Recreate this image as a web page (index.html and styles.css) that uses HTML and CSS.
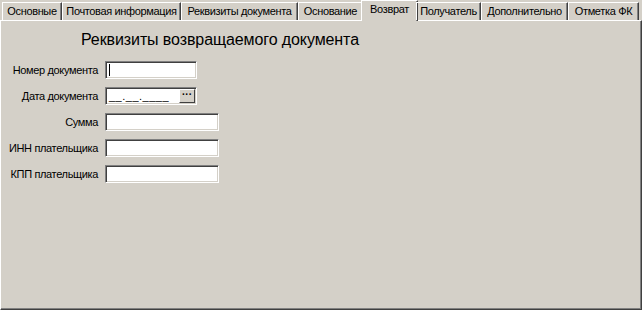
FILE: index.html
```html
<!DOCTYPE html>
<html lang="ru">
<head>
    <meta charset="UTF-8">
    <title>Возврат</title>
    <link rel="stylesheet" href="styles.css">
</head>
<body>
    <div class="tabs">
        <div class="tab w1">Основные</div>
        <div class="tab w2">Почтовая информация</div>
        <div class="tab w3">Реквизиты документа</div>
        <div class="tab w4">Основание</div>
        <div class="tab w5 active">Возврат</div>
        <div class="tab w6">Получатель</div>
        <div class="tab w7">Дополнительно</div>
        <div class="tab w8">Отметка ФК</div>
    </div>

    <div class="page">
        <div class="title">Реквизиты возвращаемого документа</div>

        <div class="form">
            <label class="lbl">Номер документа</label>
            <div class="edit short"><span class="caret"></span></div>

            <label class="lbl">Дата документа</label>
            <div class="edit short date">
                <span class="mask">__.__.____</span>
                <span class="dots">···</span>
            </div>

            <label class="lbl">Сумма</label>
            <div class="edit long"></div>

            <label class="lbl">ИНН плательщика</label>
            <div class="edit long"></div>

            <label class="lbl">КПП плательщика</label>
            <div class="edit long"></div>
        </div>
    </div>
</body>
</html>
```

FILE: styles.css
```css
body {
    margin: 0;
    width: 642px;
    height: 310px;
    overflow: hidden;
    background: #d4d0c8;
    font-family: "Liberation Sans", Arial, sans-serif;
    font-size: 11px;
    letter-spacing: -0.35px;
    color: #000;
}

/* вкладки */
.tabs {
    display: flex;
    align-items: flex-end;
    height: 20px;
    padding-left: 2px;
    position: relative;
    z-index: 1;
}

.tab {
    box-sizing: border-box;
    height: 18px;
    line-height: 16px;
    text-align: center;
    white-space: nowrap;
    border-top: 1px solid #fff;
    border-left: 1px solid #fff;
    border-right: 1px solid #404040;
    box-shadow: inset -1px 0 #808080;
}

.tab.active {
    height: 21px;
    margin: 0 -2px -1px -2px;
    line-height: 17px;
    background: #d4d0c8;
    padding-bottom: 3px;
}

.w1 { width: 60px; }
.w2 { width: 119px; }
.w3 { width: 117px; }
.w4 { width: 65px; }
.w5 { width: 57px; }
.w6 { width: 65px; }
.w7 { width: 87px; }
.w8 { width: 71px; }

/* страница */
.page {
    box-sizing: border-box;
    height: 290px;
    border-top: 1px solid #fff;
    border-left: 1px solid #fff;
    border-right: 1px solid #404040;
    border-bottom: 1px solid #404040;
    box-shadow: inset -1px -1px #808080;
}

.title {
    font-size: 16px;
    letter-spacing: -0.1px;
    padding: 10px 0 0 80px;
    height: 30px;
}

.form {
    display: grid;
    grid-template-columns: 97px auto;
    column-gap: 7px;
    row-gap: 8px;
    justify-items: start;
    align-items: center;
}

.lbl {
    justify-self: end;
}

.edit {
    box-sizing: border-box;
    height: 18px;
    background: #fff;
    border-top: 1px solid #808080;
    border-left: 1px solid #808080;
    border-right: 1px solid #fff;
    border-bottom: 1px solid #fff;
    box-shadow: inset 1px 1px #404040, inset -1px -1px #d4d0c8;
    position: relative;
}

.short { width: 92px; }
.long { width: 114px; }

.caret {
    position: absolute;
    left: 3px;
    top: 2px;
    width: 1px;
    height: 12px;
    background: #000;
}

.mask {
    position: absolute;
    left: 3px;
    top: 1px;
    line-height: 14px;
    letter-spacing: 0.5px;
}

.dots {
    position: absolute;
    right: 1px;
    top: 1px;
    width: 16px;
    height: 14px;
    box-sizing: border-box;
    background: #d4d0c8;
    border-top: 1px solid #fff;
    border-left: 1px solid #fff;
    border-right: 1px solid #404040;
    border-bottom: 1px solid #404040;
    font-size: 10px;
    font-weight: bold;
    line-height: 10px;
    letter-spacing: 0;
    text-align: center;
}
```
